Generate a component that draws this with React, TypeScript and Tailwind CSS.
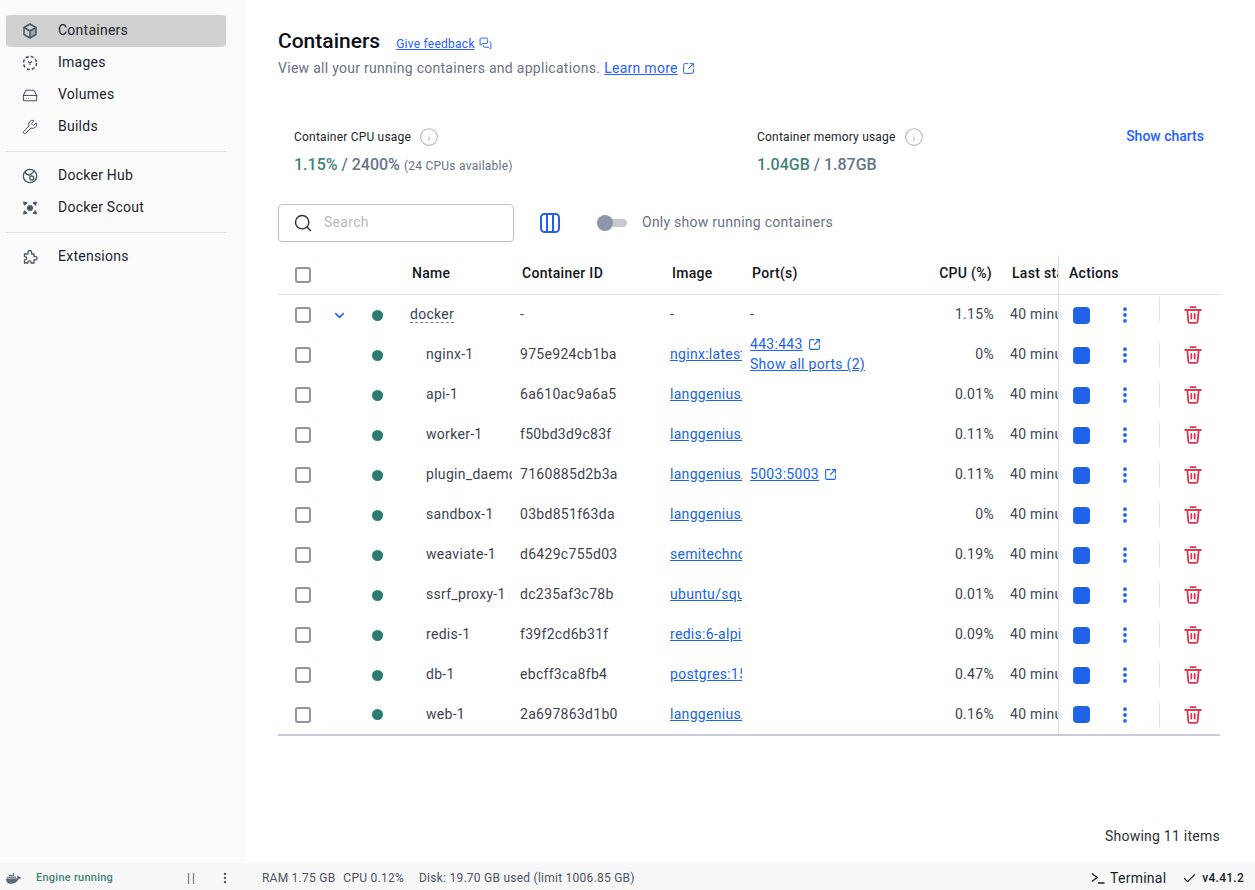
import { ChevronDown, HardDrive, Info, MessagesSquare, Search, SquareArrowOutUpRight, Wrench, Check, EllipsisVertical } from "lucide-react";
import { FaDocker } from "react-icons/fa";

type Row = {
    name: string;
    id: string;
    image: string;
    port?: string;
    allPorts?: boolean;
    cpu: string;
    height?: string;
};

const rows: Row[] = [
    { name: "nginx-1", id: "975e924cb1ba", image: "nginx:latest", port: "443:443", allPorts: true, cpu: "0%" },
    { name: "api-1", id: "6a610ac9a6a5", image: "langgenius/dify-api", cpu: "0.01%" },
    { name: "worker-1", id: "f50bd3d9c83f", image: "langgenius/dify-api", cpu: "0.11%" },
    { name: "plugin_daemon-1", id: "7160885d2b3a", image: "langgenius/dify-plugin", port: "5003:5003", cpu: "0.11%" },
    { name: "sandbox-1", id: "03bd851f63da", image: "langgenius/dify-sandbox", cpu: "0%" },
    { name: "weaviate-1", id: "d6429c755d03", image: "semitechnologies/weaviate", cpu: "0.19%" },
    { name: "ssrf_proxy-1", id: "dc235af3c78b", image: "ubuntu/squid:latest", cpu: "0.01%" },
    { name: "redis-1", id: "f39f2cd6b31f", image: "redis:6-alpine", cpu: "0.09%" },
    { name: "db-1", id: "ebcff3ca8fb4", image: "postgres:15-alpine", cpu: "0.47%" },
    { name: "web-1", id: "2a697863d1b0", image: "langgenius/dify-web", cpu: "0.16%", height: "h-[39px]" },
];

const BoxIcon = () => (
    <svg viewBox="0 0 16 16" className="w-4 h-4" fill="none" stroke="#4b5563" strokeWidth="1.5" strokeLinejoin="round">
        <path d="M8 8.200 14 5v6.500L8 15z" fill="#4b5563" fillOpacity="0.35" stroke="none" />
        <path d="M8 1 14 4.500v7L8 15l-6-3.500v-7z" />
        <path d="M2 4.500 8 8l6-3.500M8 8v7" />
    </svg>
);

const ImagesIcon = () => (
    <svg viewBox="0 0 16 16" className="w-4 h-4" fill="none" stroke="#4b5563" strokeWidth="1.6">
        <circle cx="8" cy="8" r="6.500" strokeDasharray="3 2.100" />
        <path d="M5.800 6.500 8 8l2.200-1.500M8 8v2" strokeWidth="1.300" />
    </svg>
);

const HubIcon = () => (
    <svg viewBox="0 0 16 16" className="w-4 h-4" fill="none" stroke="#4b5563" strokeWidth="1.3">
        <circle cx="8" cy="8" r="6.700" />
        <path d="M3 3.500c.5 2.500 2.500 3.500 5 3.500M12.500 3 8 7" />
        <circle cx="9.800" cy="10" r="2" />
    </svg>
);

const ScoutIcon = () => (
    <svg viewBox="0 0 16 16" className="w-4 h-4" fill="#4b5563" stroke="#4b5563" strokeWidth="1" strokeLinejoin="round">
        <circle cx="8" cy="8" r="3" stroke="none" />
        <path d="M1.500 2 5 2.800 2.500 5.300zM14.500 2 11 2.800l2.500 2.500zM14.500 14 11 13.200l2.500-2.500zM1.500 14 5 13.200l-2.500-2.500z" />
    </svg>
);

const PuzzleIcon = () => (
    <svg viewBox="0 0 16 16" className="w-4 h-4" fill="none" stroke="#4b5563" strokeWidth="1.3" strokeLinejoin="round">
        <path d="M2.500 5H6C5.600 3 6.400 1.500 7.800 1.500S10 3 9.600 5H12v2.500c1.800-.4 3 .4 3 1.700s-1.200 2.100-3 1.700V14H9c.3-1.500-.4-2.200-1.500-2.200S5.700 12.500 6 14H2.500v-3.200c1.300.2 2.200-.5 2.200-1.600S3.800 7.400 2.500 7.600z" />
    </svg>
);

const TrashIcon = () => (
    <svg viewBox="0 0 18 18" className="w-[18px] h-[18px] ml-6" fill="none" stroke="#e0364c" strokeWidth="1.800" strokeLinecap="round" strokeLinejoin="round">
        <path d="M6.500 1.200h5M1.200 4h15.600M3.300 4l1 11.300a1.500 1.500 0 0 0 1.500 1.500h6.400a1.500 1.500 0 0 0 1.500-1.500L14.700 4M7.300 8v4.500M10.700 8v4.500" />
    </svg>
);

const TerminalIcon = () => (
    <svg viewBox="0 0 14 12" className="w-[14px] h-3" fill="none" stroke="#1a1f2b" strokeWidth="1.400">
        <path d="M1 1.500 6 5.500 1 9.500M7 11h6.500" />
    </svg>
);

const NavItem = ({ icon, label, active }: { icon: React.ReactNode; label: string; active?: boolean }) => (
    <div className={`flex items-center h-8 rounded pl-4 ${active ? "bg-[#d0d0d0]" : ""}`}>
        <div className="w-4 flex justify-center text-[#4b5563]">{icon}</div>
        <span className="ml-5 pb-0.5 text-sm text-[#1a1f2b] tracking-[0.25px]">{label}</span>
    </div>
);

const Sidebar = () => (
    <div className="w-[246px] shrink-0 bg-[#fafafa] pt-[15px] pl-1.5 pr-5">
        <NavItem active label="Containers" icon={<BoxIcon />} />
        <NavItem label="Images" icon={<ImagesIcon />} />
        <NavItem label="Volumes" icon={<HardDrive size={17} strokeWidth={1.6} />} />
        <NavItem label="Builds" icon={<Wrench size={16} strokeWidth={1.5} />} />
        <div className="h-px bg-[#e3e3e3] my-2" />
        <NavItem label="Docker Hub" icon={<HubIcon />} />
        <NavItem label="Docker Scout" icon={<ScoutIcon />} />
        <div className="h-px bg-[#e3e3e3] my-2" />
        <NavItem label="Extensions" icon={<PuzzleIcon />} />
    </div>
);

const Checkbox = () => (
    <div className="w-4 h-4 rounded-[3px] border-2 border-[#8d95a8] bg-white" />
);

const Actions = ({ first }: { first?: boolean }) => (
    <div className="w-[162px] shrink-0 h-full flex items-center border-l border-[#dfdfdf] pl-[14px]">
        <div className="w-[17px] h-[17px] rounded-[4px] bg-[#2163e8]" />
        <div className="w-[52px] ml-[9px] flex justify-center">
            <EllipsisVertical size={20} strokeWidth={2.6} className="text-[#2163e8]" />
        </div>
        <div className={`w-px h-6 bg-[#e3e3e3] ml-2 ${first ? "mb-3" : ""}`} />
        <TrashIcon />
    </div>
);

const TableRow = ({ row }: { row: Row }) => (
    <div className={`flex items-center text-sm text-[#3d4350] tracking-[0.3px] ${row.height ?? "h-10"}`}>
        <div className="w-[17px] ml-[17px] shrink-0"><Checkbox /></div>
        <div className="w-[35px] shrink-0" />
        <div className="w-[36px] shrink-0 flex justify-end"><span className="w-[11px] h-[11px] rounded-full bg-[#2c7d70]" /></div>
        <div className="w-[102px] ml-[27px] pb-0.5 shrink-0 overflow-hidden whitespace-nowrap pl-[16px]">{row.name}</div>
        <div className="w-[150px] ml-[8px] pb-0.5 shrink-0">{row.id}</div>
        <div className="w-[72px] pb-0.5 shrink-0 overflow-hidden whitespace-nowrap text-[#2163e8] underline">{row.image}</div>
        <div className="w-[180px] ml-[8px] pb-0.5 shrink-0 text-[#2163e8] leading-5">
            {row.port && (
                <div className="flex items-center">
                    <span className="underline">{row.port}</span>
                    <SquareArrowOutUpRight size={13} strokeWidth={2} className="ml-[5px]" />
                </div>
            )}
            {row.allPorts && <div className="underline">Show all ports (2)</div>}
        </div>
        <div className="w-[64px] pb-0.5 shrink-0 text-right">{row.cpu}</div>
        <div className="w-[48px] ml-[16px] pb-0.5 shrink-0 overflow-hidden whitespace-nowrap">40 minutes ago</div>
        <Actions />
    </div>
);

const Table = () => (
    <div className="mt-[13px] border-b-2 border-[#c9ccd8]">
        <div className="flex items-center h-10 border-b border-[#dfdfdf] text-sm font-medium text-[#11151c] tracking-[0.3px]">
            <div className="w-[17px] ml-[17px] shrink-0"><Checkbox /></div>
            <div className="w-[100px] shrink-0" />
            <div className="w-[110px] pb-[3px] shrink-0">Name</div>
            <div className="w-[150px] pb-[3px] shrink-0">Container ID</div>
            <div className="w-[80px] pb-[3px] shrink-0">Image</div>
            <div className="w-[180px] pb-[3px] shrink-0">Port(s)</div>
            <div className="w-[60px] pb-[3px] shrink-0 text-right">CPU (%)</div>
            <div className="w-[46px] ml-[20px] pb-[3px] shrink-0 overflow-hidden whitespace-nowrap">Last started</div>
            <div className="w-[162px] pb-[3px] shrink-0 h-full flex items-center border-l border-[#dfdfdf] pl-[10px]">Actions</div>
        </div>
        <div className="flex items-center h-10 text-sm text-[#3d4350] tracking-[0.3px]">
            <div className="w-[17px] ml-[17px] shrink-0"><Checkbox /></div>
            <div className="w-[35px] shrink-0 flex justify-end"><ChevronDown size={15} strokeWidth={2.4} className="text-[#2163e8]" /></div>
            <div className="w-[36px] shrink-0 flex justify-end"><span className="w-[11px] h-[11px] rounded-full bg-[#2c7d70]" /></div>
            <div className="w-[94px] ml-[27px] pb-0.5 shrink-0"><span className="border-b border-dashed border-[#777] leading-4 inline-block">docker</span></div>
            <div className="w-[150px] ml-[16px] pb-0.5 shrink-0">-</div>
            <div className="w-[80px] pb-0.5 shrink-0">-</div>
            <div className="w-[172px] pb-0.5 shrink-0">-</div>
            <div className="w-[72px] pb-0.5 shrink-0 text-right">1.15%</div>
            <div className="w-[48px] ml-[16px] pb-0.5 shrink-0 overflow-hidden whitespace-nowrap">40 minutes ago</div>
            <Actions first />
        </div>
        {rows.map((r) => (
            <TableRow key={r.id} row={r} />
        ))}
    </div>
);

const Main = () => (
    <div className="w-[1009px] bg-white pl-8 pr-[35px] pt-[30px] flex flex-col">
        <div className="flex items-center h-[23px]">
            <h1 className="text-[21px] font-medium text-[#0b0f15] leading-[23px]">Containers</h1>
            <a className="ml-4 mt-1 text-xs text-[#2560ff] underline tracking-[0.25px]">Give feedback</a>
            <MessagesSquare size={13} strokeWidth={1.8} className="ml-1 mt-1 text-[#2560ff]" />
        </div>
        <div className="flex items-center mt-[5px] text-sm text-[#677285] h-5 tracking-[0.28px]">
            View all your running containers and applications.
            <a className="ml-1 text-[#2560ff] underline">Learn more</a>
            <SquareArrowOutUpRight size={13} strokeWidth={1.8} className="ml-[4px] text-[#2560ff]" />
        </div>
        <div className="flex mt-[49px] px-4 h-[50px]">
            <div className="w-[463px]">
                <div className="flex items-center text-xs text-[#1a1f2b] h-5 tracking-[0.2px]">
                    Container CPU usage
                    <Info size={20} strokeWidth={1.3} className="ml-[8px] text-[#b5b5b5]" />
                </div>
                <div className="mt-[6px] flex items-baseline text-base font-medium text-[#677285] leading-6 whitespace-pre">
                    <span className="text-[#3f8478]">1.15%</span> / 2400%
                    <span className="ml-1 text-xs font-normal tracking-[0.25px]">(24 CPUs available)</span>
                </div>
            </div>
            <div className="flex-1">
                <div className="flex items-center text-xs text-[#1a1f2b] h-5 tracking-[0.2px]">
                    Container memory usage
                    <Info size={20} strokeWidth={1.3} className="ml-[8px] text-[#b5b5b5]" />
                </div>
                <div className="mt-[6px] text-base font-medium text-[#677285] leading-6 whitespace-pre">
                    <span className="text-[#3f8478]">1.04GB</span> / 1.87GB
                </div>
            </div>
            <div className="text-sm font-medium text-[#2560ff] leading-[18px]">Show charts</div>
        </div>
        <div className="flex items-center mt-[27px] h-[38px]">
            <div className="w-[236px] h-full border border-[#bfbfbf] rounded flex items-center pl-[14px] bg-white">
                <Search size={20} strokeWidth={1.7} className="text-[#2b303b]" />
                <span className="ml-[11px] pb-0.5 text-sm text-[#b8b8b8] tracking-[0.3px]">Search</span>
            </div>
            <svg viewBox="0 0 20 20" className="w-5 h-5 ml-[26px]" fill="none" stroke="#2163e8" strokeWidth="2">
                <rect x="1" y="1" width="18" height="18" rx="3.500" />
                <path d="M7 1v18M13 1v18" />
            </svg>
            <div className="relative w-[30px] h-4 ml-[37px] flex items-center">
                <div className="w-[30px] h-2 rounded-full bg-[#c6c9d3]" />
                <div className="absolute left-0 w-4 h-4 rounded-full bg-[#8d95a8]" />
            </div>
            <span className="ml-[15px] pb-0.5 text-sm text-[#677285] tracking-[0.25px]">Only show running containers</span>
        </div>
        <Table />
        <div className="mt-[90px] text-right text-sm text-[#2b303b] tracking-[0.25px]">Showing 11 items</div>
    </div>
);

const Footer = () => (
    <div className="h-[27px] shrink-0 bg-[#f7f7f7] flex items-center pt-[3px] text-xs text-[#4b5563] tracking-[0.25px]">
        <FaDocker size={15} className="ml-[6px] text-[#5f6675]" />
        <span className="ml-[15px] text-[11px] font-medium text-[#3f8478]">Engine running</span>
        <span className="ml-[74px] text-xs tracking-[2px]">||</span>
        <EllipsisVertical size={14} className="ml-[21px]" />
        <span className="ml-[30px]">RAM 1.75 GB</span>
        <span className="ml-2">CPU 0.12%</span>
        <span className="ml-[15px]">Disk: 19.70 GB used (limit 1006.85 GB)</span>
        <div className="ml-auto flex items-center text-[#1a1f2b]">
            <TerminalIcon />
            <span className="ml-[5px] text-sm">Terminal</span>
            <Check size={15} strokeWidth={1.8} className="ml-[16px]" />
            <span className="ml-[5px] mr-[11px] font-medium">v4.41.2</span>
        </div>
    </div>
);

export default function App() {
    return (
        <div className="w-[1255px] h-[890px] flex flex-col overflow-hidden font-['Roboto',sans-serif] bg-white">
            <div className="flex flex-1 min-h-0">
                <Sidebar />
                <Main />
            </div>
            <Footer />
        </div>
    );
}
